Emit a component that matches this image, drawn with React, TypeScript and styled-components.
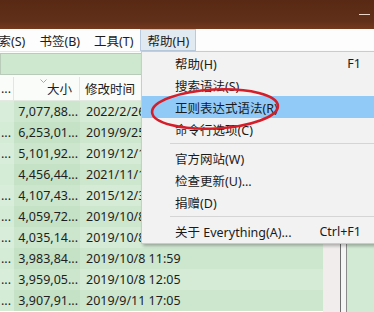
import React from 'react';
import styled, { createGlobalStyle } from 'styled-components';

const GlobalStyle = createGlobalStyle`
  html, body { margin: 0; padding: 0; overflow: hidden; background: #ffffff; }
  body { font-family: "Noto Sans", "Noto Sans CJK SC", sans-serif; }
  #root { width: 374px; height: 312px; }
`;

const Window = styled.div`
  position: relative;
  width: 374px;
  height: 312px;
  overflow: hidden;
  display: flex;
  flex-direction: column;
  font-size: 12.5px;
  color: #1c1c1c;
`;

const TitleBar = styled.div`
  flex: none;
  height: 29px;
  box-sizing: border-box;
  padding: 14px 4px 0 0;
  display: flex;
  justify-content: flex-end;
  align-items: flex-start;
  background: linear-gradient(#582914, #61301a 75%, #74391d);
`;

const MinimizeGlyph = styled.span`
  display: block;
  width: 11px;
  height: 1px;
  background: #ead6c8;
`;

const MenuBar = styled.div`
  flex: none;
  height: 23px;
  box-sizing: border-box;
  display: flex;
  align-items: stretch;
  background: #fdfdfd;
  border-bottom: 1px solid #e6e6e6;
  margin-left: -21px;
`;

const MenuBarItem = styled.div<{ $open?: boolean }>`
  display: flex;
  align-items: center;
  padding: 0 6px;
  border: 1px solid ${p => (p.$open ? '#b9cade' : 'transparent')};
  background: ${p => (p.$open ? '#e1e9f1' : 'transparent')};
  white-space: nowrap;
`;

const Toolbar = styled.div`
  flex: none;
  height: 25px;
  box-sizing: border-box;
  padding: 1px 0 2px;
  background: #fbfdfb;
`;

const SearchBox = styled.div`
  height: 100%;
  box-sizing: border-box;
  border: 1px solid #b9cbb9;
  background: #cde8ce;
`;

const Body = styled.div`
  flex: 1;
  display: flex;
  min-height: 0;
`;

const ListPane = styled.div`
  width: 323px;
  display: flex;
  flex-direction: column;
  overflow: hidden;
`;

const HeaderRow = styled.div`
  flex: none;
  height: 24px;
  box-sizing: border-box;
  display: grid;
  grid-template-columns: 14px 66px 1fr;
  background: #fafcfa;
  border-bottom: 1px solid #e2eae2;
`;

const HeaderCell = styled.div<{ $right?: boolean }>`
  position: relative;
  display: flex;
  align-items: center;
  justify-content: ${p => (p.$right ? 'flex-end' : 'flex-start')};
  padding: ${p => (p.$right ? '0 7px 0 0' : '0 0 0 5px')};
  border-right: 1px solid #e4e4e4;
  white-space: nowrap;
  overflow: hidden;
  color: #202020;
  &:first-child { padding-left: 1px; }
  &:last-child { border-right: none; }
`;

const SortArrow = styled.svg`
  position: absolute;
  left: 26px;
  top: 2px;
`;

const Row = styled.div`
  display: grid;
  grid-template-columns: 14px 66px 1fr;
  height: 21px;
`;

const cellColors = {
  name: ['#d9eeda', '#d4ebd5'],
  size: ['#cbe6cc', '#c5e2c6'],
  date: ['#d5ebd6', '#cde6ce'],
};

const Cell = styled.div<{ $col: 'name' | 'size' | 'date'; $alt?: boolean }>`
  display: flex;
  align-items: center;
  justify-content: ${p => (p.$col === 'size' ? 'flex-end' : 'flex-start')};
  padding: ${p => (p.$col === 'size' ? '0 2px 0 0' : p.$col === 'date' ? '0 0 0 6px' : '0 0 0 1px')};
  background: ${p => cellColors[p.$col][p.$alt ? 1 : 0]};
  white-space: nowrap;
  overflow: hidden;
  color: #1e1e1e;
`;

const ScrollTrack = styled.div`
  width: 17px;
  background: #f1eded;
`;

const Splitter = styled.div`
  width: 7px;
  box-sizing: border-box;
  border-left: 1px solid #6e6e6e;
  border-right: 1px solid #8c8c8c;
  background: #f5f5f5;
`;

const SidePane = styled.div`
  flex: 1;
  background: #d2e9d3;
`;

const Dropdown = styled.div`
  position: absolute;
  left: 141px;
  top: 51px;
  width: 250px;
  box-sizing: border-box;
  padding: 0 0 1px;
  background: #f2f2f2;
  border: 1px solid #cbcbcb;
  box-shadow: 2px 2px 3px rgba(0, 0, 0, 0.28);
`;

const MenuItem = styled.div<{ $hl?: boolean }>`
  height: 22px;
  display: flex;
  align-items: center;
  padding: 0 29px 0 33px;
  background: ${p => (p.$hl ? '#91c9f7' : 'transparent')};
  white-space: nowrap;
  color: #1a1a1a;
`;

const Shortcut = styled.span`
  margin-left: auto;
`;

const Separator = styled.div`
  height: 7px;
  display: flex;
  align-items: center;
  &::after {
    content: '';
    flex: 1;
    height: 1px;
    margin-left: 28px;
    background: #d5d5d5;
  }
`;

const Annotation = styled.svg`
  position: absolute;
  left: 146px;
  top: 84px;
  pointer-events: none;
`;

const rows = [
  { name: '', size: '7,077,88...', date: '2022/2/26 15:30' },
  { name: '...', size: '6,253,01...', date: '2019/9/25 10:02' },
  { name: '...', size: '5,101,92...', date: '2019/12/18 9:14' },
  { name: '', size: '4,456,44...', date: '2021/11/12 21:47' },
  { name: '...', size: '4,107,43...', date: '2015/12/30 16:08' },
  { name: '...', size: '4,059,72...', date: '2019/10/8 12:05' },
  { name: '...', size: '4,035,14...', date: '2019/10/8 12:03' },
  { name: '...', size: '3,983,84...', date: '2019/10/8 11:59' },
  { name: '...', size: '3,959,05...', date: '2019/10/8 12:05' },
  { name: '...', size: '3,907,91...', date: '2019/9/11 17:05' },
];

export default function App() {
  return (
    <>
      <GlobalStyle />
      <Window>
        <TitleBar>
          <MinimizeGlyph />
        </TitleBar>
        <MenuBar>
          <MenuBarItem>搜索(S)</MenuBarItem>
          <MenuBarItem>书签(B)</MenuBarItem>
          <MenuBarItem>工具(T)</MenuBarItem>
          <MenuBarItem $open>帮助(H)</MenuBarItem>
        </MenuBar>
        <Toolbar>
          <SearchBox />
        </Toolbar>
        <Body>
          <ListPane>
            <HeaderRow>
              <HeaderCell>...</HeaderCell>
              <HeaderCell $right>
                <SortArrow width="7" height="4" viewBox="0 0 7 4">
                  <path d="M0.5 0.5 L3.5 3.5 L6.5 0.5" fill="none" stroke="#a8a8a8" strokeWidth="1" />
                </SortArrow>
                大小
              </HeaderCell>
              <HeaderCell>修改时间</HeaderCell>
            </HeaderRow>
            {rows.map((r, i) => (
              <Row key={i}>
                <Cell $col="name" $alt={i % 2 === 1}>{r.name}</Cell>
                <Cell $col="size" $alt={i % 2 === 1}>{r.size}</Cell>
                <Cell $col="date" $alt={i % 2 === 1}>{r.date}</Cell>
              </Row>
            ))}
          </ListPane>
          <ScrollTrack />
          <Splitter />
          <SidePane />
        </Body>

        <Dropdown>
          <MenuItem>帮助(H)<Shortcut>F1</Shortcut></MenuItem>
          <MenuItem>搜索语法(S)</MenuItem>
          <MenuItem $hl>正则表达式语法(R)</MenuItem>
          <MenuItem>命令行选项(C)</MenuItem>
          <Separator />
          <MenuItem>官方网站(W)</MenuItem>
          <MenuItem>检查更新(U)...</MenuItem>
          <MenuItem>捐赠(D)</MenuItem>
          <Separator />
          <MenuItem>关于 Everything(A)...<Shortcut>Ctrl+F1</Shortcut></MenuItem>
        </Dropdown>

        <Annotation width="140" height="52" viewBox="0 0 140 52">
          <ellipse cx="69" cy="25" rx="63" ry="19.5" fill="none" stroke="#d41f2b" strokeWidth="2.6" transform="rotate(-3 69 25)" />
        </Annotation>
      </Window>
    </>
  );
}
